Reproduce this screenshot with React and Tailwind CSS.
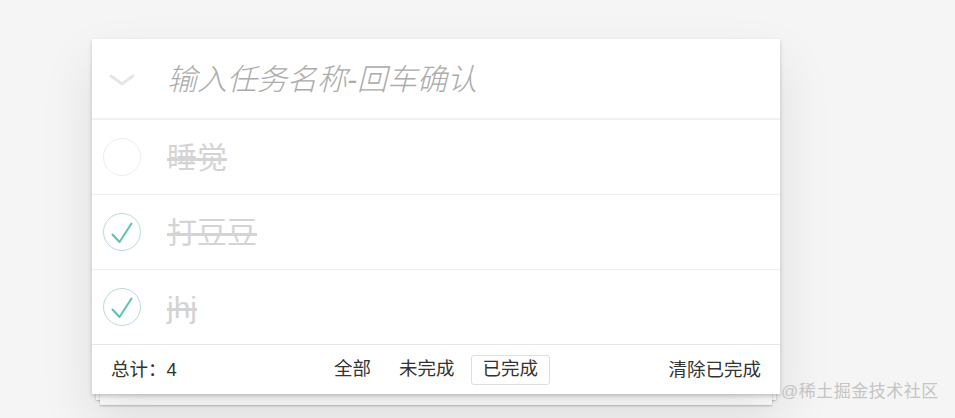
import React, { useState } from "react";

const FONT = { fontFamily: '"Helvetica Neue", "Liberation Sans", "Noto Sans CJK SC", sans-serif' };

const initialTodos = [
  { id: 1, title: "睡觉", done: false },
  { id: 2, title: "打豆豆", done: true },
  { id: 3, title: "jhj", done: true },
];

function CheckCircle({ done }) {
  return (
    <svg width="40" height="40" viewBox="0 0 40 40">
      <circle
        cx="20"
        cy="20"
        r="18.5"
        fill="none"
        stroke={done ? "#bddad5" : "#ededed"}
        strokeWidth="1"
      />
      {done && (
        <path
          d="M10.5 22.5 L17.5 30 L29.5 11.5"
          fill="none"
          stroke="#5dc2af"
          strokeWidth="2"
          strokeLinecap="round"
          strokeLinejoin="round"
        />
      )}
    </svg>
  );
}

export default function App() {
  const [todos] = useState(initialTodos);
  const [filter, setFilter] = useState("completed");

  return (
    <div
      className="relative w-[955px] h-[418px] bg-[#f5f5f5] overflow-hidden"
      style={FONT}
    >
      <div className="pt-[39px] pl-[92px]">
        <div className="relative w-[688px]">
          {/* stacked paper */}
          <div className="absolute left-[4px] right-[4px] bottom-[-6px] h-[20px] bg-white shadow-[0_1px_2px_rgba(0,0,0,0.25)]" />
          <div className="absolute left-[8px] right-[8px] bottom-[-11px] h-[20px] bg-white shadow-[0_1px_2px_rgba(0,0,0,0.25)]" />

          <div className="relative bg-white shadow-[0_2px_4px_rgba(0,0,0,0.2),0_25px_50px_rgba(0,0,0,0.1)]">
            {/* header */}
            <div className="flex items-center h-[80px] shadow-[inset_0_-2px_1px_rgba(0,0,0,0.03)]">
              <div className="w-[60px] flex justify-center pt-[2px]">
                <svg width="26" height="12" viewBox="0 0 26 12">
                  <path
                    d="M2 2 L13 10 L24 2"
                    fill="none"
                    stroke="#e6e6e6"
                    strokeWidth="3"
                    strokeLinecap="round"
                  />
                </svg>
              </div>
              <input
                className="flex-1 pl-[15px] text-[30px] italic font-light text-[#4d4d4d] placeholder:text-[#ababab] outline-none bg-transparent"
                placeholder="输入任务名称-回车确认"
              />
            </div>

            {/* list */}
            <ul>
              {todos.map((t) => (
                <li
                  key={t.id}
                  className="flex items-center h-[75px] border-t border-[#ededed]"
                >
                  <div className="w-[58px] flex justify-center pl-[1px]">
                    <CheckCircle done={t.done} />
                  </div>
                  <span className="pl-[17px] text-[30px] text-[#d4d4d4] line-through">
                    {t.title}
                  </span>
                </li>
              ))}
            </ul>

            {/* footer */}
            <div className="grid grid-cols-[1fr_auto_1fr] items-center h-[50px] px-[19px] border-t border-[#e6e6e6] text-[18.5px] text-[#333]">
              <span>总计：4</span>
              <div className="flex items-center gap-[4px]">
                {[
                  ["all", "全部"],
                  ["active", "未完成"],
                  ["completed", "已完成"],
                ].map(([k, label]) => (
                  <button
                    key={k}
                    onClick={() => setFilter(k)}
                    className={
                      "h-[30px] px-[11px] rounded-[3px] border leading-none " +
                      (filter === k ? "border-[#e2dcdc]" : "border-transparent")
                    }
                  >
                    {label}
                  </button>
                ))}
              </div>
              <button className="justify-self-end">清除已完成</button>
            </div>
          </div>
        </div>
      </div>

      <div className="absolute left-[781px] top-[379px] text-[17px] text-[#c4c4c4] tracking-[0.5px]">
        @稀土掘金技术社区
      </div>
    </div>
  );
}
